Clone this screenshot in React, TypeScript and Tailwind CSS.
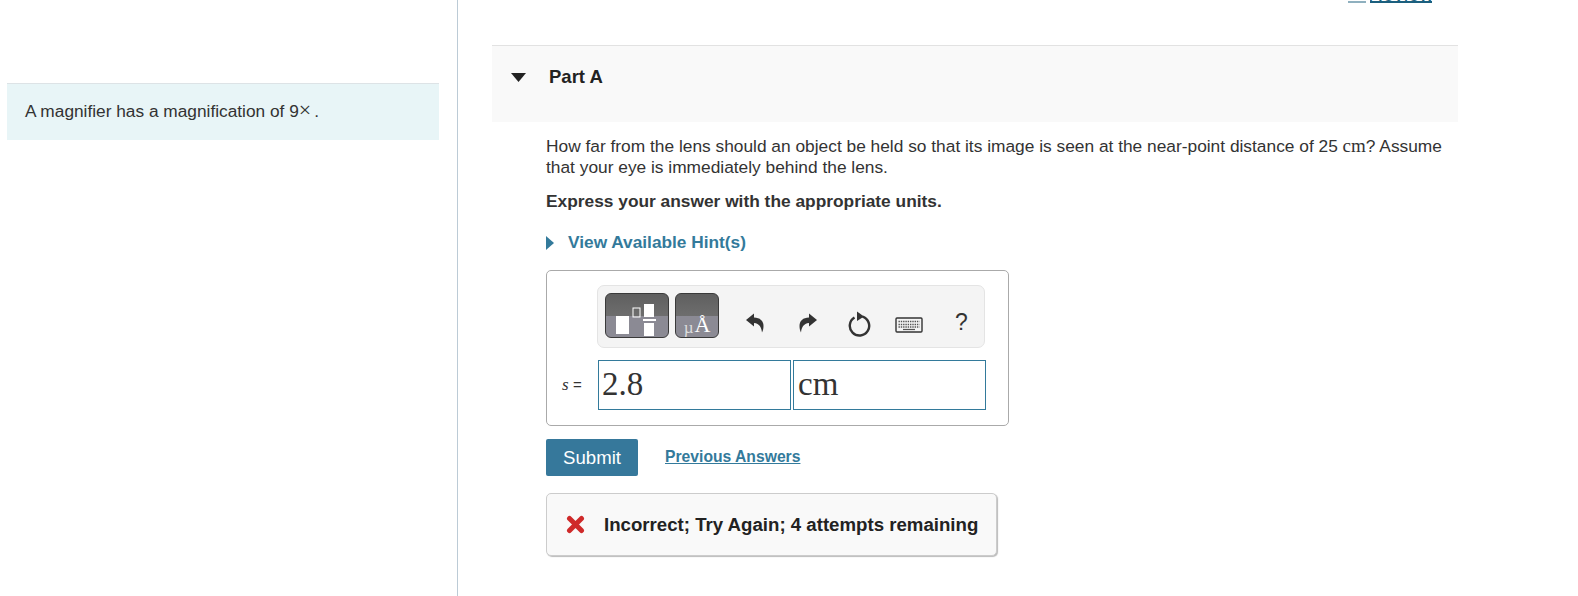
const sans = "font-['Liberation_Sans',Arial,sans-serif]"

function TemplateButton() {
  return (
    <div className="w-[64px] h-[45px] rounded-[6px] border border-[#3a3a3a] bg-[linear-gradient(#5f5f5f_0,#6e6e6e_52%,#8b8a94_52%,#8b8a94_100%)] shrink-0">
      <svg width="62" height="43" viewBox="0 0 62 43">
        <rect x="10" y="22" width="13" height="18" fill="#fff" />
        <rect x="27" y="14" width="7" height="9" fill="none" stroke="#fff" strokeWidth="1" />
        <rect x="38" y="10" width="10" height="13" fill="#fff" />
        <rect x="37" y="25" width="13" height="2" fill="#fff" />
        <rect x="38" y="29" width="10" height="13" fill="#fff" />
      </svg>
    </div>
  )
}

function SymbolButton() {
  return (
    <div className="w-[44px] h-[45px] rounded-[6px] border border-[#3a3a3a] bg-[linear-gradient(#5f5f5f_0,#6e6e6e_52%,#8b8a94_52%,#8b8a94_100%)] shrink-0 flex items-end justify-center text-white font-['Liberation_Serif',serif] leading-none pb-[1px]">
      <span className="text-[17px] mr-[1px] text-[#ddd]">µ</span>
      <span className="text-[22px]">Å</span>
    </div>
  )
}

function UndoIcon({ flip }: { flip?: boolean }) {
  return (
    <svg width="20" height="22" viewBox="0 0 20 22" className={flip ? '-scale-x-100' : ''}>
      <path d="M1 8 L9 1.5 V5.5 C15 5.5 18.5 9 18.5 14 C18.5 16.5 18 18.5 17 20.5 C16.5 15.5 14.5 11.5 9 11 V14.5 Z" fill="#333" />
    </svg>
  )
}

function ResetIcon() {
  return (
    <svg width="24" height="26" viewBox="0 0 24 26">
      <path d="M7.5 6.5 A9.7 9.7 0 1 0 15.5 5.6" fill="none" stroke="#333" strokeWidth="2.4" />
      <path d="M10 0.5 L17 5.5 L10 10 Z" fill="#333" />
    </svg>
  )
}

function KeyboardIcon() {
  return (
    <svg width="28" height="16" viewBox="0 0 28 16">
      <rect x="1" y="1" width="26" height="14" rx="1" fill="#f4f4f4" stroke="#333" strokeWidth="1.4" />
      <path d="M3.5 4.5 H24.5 M3.5 7.5 H24.5 M3.5 10 H24.5" stroke="#555" strokeWidth="1.3" strokeDasharray="1.4 0.9" />
      <path d="M8 12.5 H20" stroke="#555" strokeWidth="1.2" />
    </svg>
  )
}

export default function App() {
  return (
    <div className={`flex w-[1578px] h-[596px] overflow-hidden bg-white text-[#333] ${sans}`}>
      <div className="w-[458px] shrink-0 border-r border-[#bccbd6] pt-[83px] pl-[7px]">
        <div className="w-[432px] h-[57px] bg-[#e8f5f7] border-t border-[#dde3e6] pl-[18px] pt-[16px] text-[17.3px] leading-[21px]">
          A magnifier has a magnification of 9<span className="font-['Liberation_Serif',serif] text-[22px] leading-[20px]">×</span><span className="ml-[3px]">.</span>
        </div>
      </div>

      <div className="w-[966px] ml-[34px] shrink-0">
        <div className="h-[3px] flex justify-end items-end overflow-hidden mr-[26px]">
          <div className="w-[18px] h-[2px] bg-[#8fb0bf] mr-[4px]" />
          <a className="w-[62px] h-[3px] border-b-2 border-[#1b5f7e] flex items-end justify-center overflow-hidden text-[20px] leading-none text-[#1b5f7e]">
            <span className="-mb-[3px]">Review</span>
          </a>
        </div>

        <div className="mt-[42px] h-[77px] bg-[#f9f9f9] border-t border-[#e2e2e2] flex items-start pt-[21px]">
          <svg width="15" height="9" viewBox="0 0 15 9" className="ml-[19px] mt-[6px]">
            <path d="M0 0 H15 L7.5 9 Z" fill="#222" />
          </svg>
          <div className="ml-[23px] text-[18.5px] leading-[20px] font-bold text-[#222]">Part A</div>
        </div>

        <div className="pl-[54px] pt-[14px]">
          <p className="w-[912px] text-[17.33px] leading-[21px]">
            How far from the lens should an object be held so that its image is seen at the near-point distance of 25 <span className="font-['Liberation_Serif',serif] text-[19px] leading-[20px]">cm</span>? Assume that your eye is immediately behind the lens.
          </p>
          <p className="mt-[13px] text-[17.33px] leading-[21px] font-bold">Express your answer with the appropriate units.</p>

          <div className="mt-[20px] flex items-center h-[21px] text-[17.3px] font-bold text-[#337a9b]">
            <svg width="8" height="14" viewBox="0 0 8 14">
              <path d="M0 0 L8 7 L0 14 Z" fill="#337a9b" />
            </svg>
            <span className="ml-[14px]">View Available Hint(s)</span>
          </div>

          <div className="mt-[17px] w-[463px] h-[156px] border border-[#aaa] rounded-[5px] pl-[50px] pt-[14px]">
            <div className="w-[388px] h-[63px] bg-[#f4f4f4] border border-[#e4e4e4] rounded-[7px] flex items-start pl-[7px] pt-[7px]">
              <TemplateButton />
              <div className="ml-[6px]"><SymbolButton /></div>
              <div className="ml-[26px] mt-[19px]"><UndoIcon /></div>
              <div className="ml-[33px] mt-[19px]"><UndoIcon flip /></div>
              <div className="ml-[29px] mt-[18px]"><ResetIcon /></div>
              <div className="ml-[24px] mt-[24px]"><KeyboardIcon /></div>
              <div className="ml-[32px] mt-[18px] text-[23px] leading-none text-[#333]">?</div>
            </div>
            <div className="-ml-[36px] mt-[12px] flex items-center">
              <div className="w-[37px] pl-[1px] text-[17px] font-['Liberation_Serif',serif] whitespace-nowrap">
                <i>s</i> <span className={`${sans} text-[15px]`}>=</span>
              </div>
              <div className="w-[193px] h-[50px] border border-[#337a9b] pl-[3px] text-[33px] leading-[46px] font-['Liberation_Serif',serif]">2.8</div>
              <div className="w-[193px] h-[50px] ml-[2px] border border-[#337a9b] pl-[4px] text-[33px] leading-[47px] font-['Liberation_Serif',serif]">cm</div>
            </div>
          </div>

          <div className="mt-[13px] flex items-center">
            <button className="w-[92px] h-[37px] bg-[#36789b] text-white rounded-[2px] text-[18.6px]">Submit</button>
            <a className="ml-[27px] mb-[2px] text-[15.7px] font-bold text-[#337a9b] underline">Previous Answers</a>
          </div>

          <div className="mt-[17px] w-[451px] h-[63px] bg-[#f9f9f9] border border-[#ccc] rounded-[5px] shadow-[1px_1px_1px_#bbb] flex items-center pl-[19px]">
            <svg width="19" height="19" viewBox="0 0 19 19">
              <path d="M3.5 15.5 L15.5 3.5 M3.5 3.5 L15.5 15.5" stroke="#cf2a2a" strokeWidth="5" strokeLinecap="round" />
            </svg>
            <span className="ml-[19px] pt-[1px] text-[18.65px] font-bold text-[#222] whitespace-nowrap">Incorrect; Try Again; 4 attempts remaining</span>
          </div>
        </div>
      </div>
    </div>
  )
}
